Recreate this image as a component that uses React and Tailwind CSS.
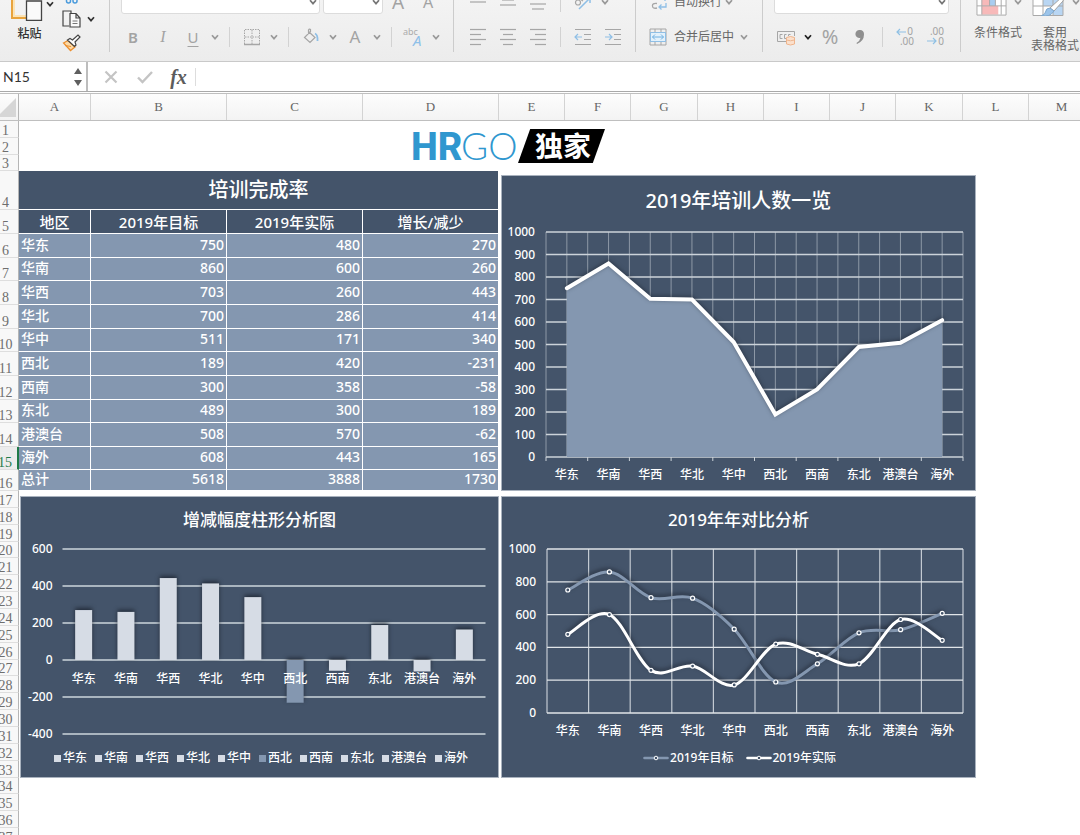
import React from 'react';
import clsx from 'clsx';

const REGIONS = ['华东', '华南', '华西', '华北', '华中', '西北', '西南', '东北', '港澳台', '海外'];
const TARGET = [750, 860, 703, 700, 511, 189, 300, 489, 508, 608];
const ACTUAL = [480, 600, 260, 286, 171, 420, 358, 300, 570, 443];
const DIFF = [270, 260, 443, 414, 340, -231, -58, 189, -62, 165];

const COLUMNS = [
  ['A', 'w-[72px]'], ['B', 'w-[136px]'], ['C', 'w-[136px]'], ['D', 'w-[136px]'],
  ['E', 'w-[66px]'], ['F', 'w-[66px]'], ['G', 'w-[67px]'], ['H', 'w-[66px]'], ['I', 'w-[66px]'],
  ['J', 'w-[66px]'], ['K', 'w-[67px]'], ['L', 'w-[66px]'], ['M', 'w-[66px]'],
];

const DATA_HEIGHTS = [
  'h-[24px]', 'h-[23px]', 'h-[24px]', 'h-[24px]', 'h-[23px]', 'h-[24px]',
  'h-[24px]', 'h-[23px]', 'h-[24px]', 'h-[23px]', 'h-[21px]',
];

const ROW_HEIGHTS = [
  'h-[17px]', 'h-[17px]', 'h-[16px]', 'h-[39px]', 'h-[24px]',
  ...DATA_HEIGHTS,
  ...Array.from({ length: 21 }, (_, i) => (i % 7 === 3 ? 'h-[16px]' : 'h-[17px]')),
];

const TABLE_ROWS = [
  ...REGIONS.map((name, i) => [name, TARGET[i], ACTUAL[i], DIFF[i]]),
  ['总计', 5618, 3888, 1730],
];

/* ---------- Ribbon ---------- */

function Chevron({ className = 'text-[#9a9a9a]' }) {
  return (
    <svg className={clsx('w-2 h-2 shrink-0', className)} viewBox="0 0 8 8" fill="none" stroke="currentColor" strokeWidth="1.7">
      <path d="M1 2.2L4 5.6L7 2.2" />
    </svg>
  );
}

function Tool({ label, children }) {
  return (
    <button type="button" aria-label={label} className="w-[30px] h-6 shrink-0 flex items-center justify-center text-[#a3a3a3]">
      {children}
    </button>
  );
}

function More({ label, className }) {
  return (
    <button type="button" aria-label={label} className="w-[14px] h-6 shrink-0 flex items-center justify-center">
      <Chevron className={className} />
    </button>
  );
}

function Separator() {
  return <div className="w-px h-5 mx-[7px] shrink-0 bg-[#d2d2d2]" />;
}

function Group({ className, children }) {
  return (
    <div className={clsx('flex flex-col gap-[11px] pb-[3px] shrink-0 border-l border-[#cccccc]', className)}>
      {children}
    </div>
  );
}

function Dropdown({ label, className }) {
  return (
    <div className={clsx('relative h-6 shrink-0', className)}>
      <select aria-label={label} className="w-full h-6 appearance-none rounded-[3px] bg-white border border-[#dcdcdc]" />
      <span className="absolute right-[3px] top-2 pointer-events-none"><Chevron className="text-[#777777]" /></span>
    </div>
  );
}

function Lines({ rows }) {
  return (
    <svg width="18" height="18" viewBox="0 0 18 18" stroke="#a6a6a6" strokeWidth="1.2">
      {rows.map(([x1, x2, y]) => <path key={y} d={`M${x1} ${y}H${x2}`} />)}
    </svg>
  );
}

function Indent({ flip }) {
  return (
    <svg width="18" height="18" viewBox="0 0 18 18" fill="none" strokeWidth="1.2">
      <path d="M1 1.5H17M10 6.5H17M10 11.5H17M1 16.5H17" stroke="#a6a6a6" />
      <path d={flip ? 'M1 9H8M5 6L8 9L5 12' : 'M8 9H1M4 6L1 9L4 12'} stroke="#8fbfe6" />
    </svg>
  );
}

function Decimals({ more }) {
  return (
    <svg className="overflow-visible" width="20" height="20" viewBox="0 0 20 20" fill="none">
      <g fill="#a3a3a3" fontFamily="Noto Sans, sans-serif" fontSize="10">
        <text x={more ? 19 : 18} y="8" textAnchor="end">{more ? '.00' : '0'}</text>
        <text x="19" y="18" textAnchor="end">{more ? '0' : '.00'}</text>
      </g>
      <path d={more ? 'M2 14H11M8 11L11 14L8 17' : 'M11 5H2M5 2L2 5L5 8'} stroke="#8fc0e4" strokeWidth="1.2" />
    </svg>
  );
}

function Clipboard() {
  return (
    <div className="flex items-start shrink-0 w-[109px] pl-[10px]">
      <button type="button" className="relative flex flex-col items-center gap-[6px] pb-3 text-xs leading-[13px] font-medium text-[#333333]">
        <svg width="33" height="30" viewBox="0 0 33 30" fill="none">
          <path d="M2 0V27H16" stroke="#e8a33c" strokeWidth="2" />
          <path d="M4 0V25H16" stroke="#fbe3b5" strokeWidth="2" />
          <path d="M16.5 10H31.5V29.5H16.5Z" fill="#fafafa" stroke="#444" strokeWidth="1.3" />
        </svg>
        <span className="pl-[6px]">粘贴</span>
      </button>
      <button type="button" aria-label="粘贴选项" className="mt-2 ml-[3px] h-[10px]"><Chevron className="text-[#333333]" /></button>
      <div className="flex flex-col gap-[6px] ml-2 pt-[3px]">
        <button type="button" aria-label="剪切" className="h-[10px]">
          <svg width="18" height="10" viewBox="0 0 18 10" fill="none" stroke="#4a9bdc" strokeWidth="1.5">
            <rect x="4.5" y="3" width="4" height="6" rx="2" />
            <rect x="11" y="3" width="4" height="6" rx="2" />
          </svg>
        </button>
        <div className="flex items-center gap-[6px]">
          <button type="button" aria-label="复制">
            <svg width="19" height="18" viewBox="0 0 19 18" fill="none" stroke="#444" strokeWidth="1.2">
              <path d="M7 16H1V1H9V3" />
              <path d="M8 3.5H14L18 8V17H8ZM14 3.5V8H18" fill="#fafafa" />
              <path d="M10.5 11H15.5M10.5 13.5H15.5" stroke="#777" />
            </svg>
          </button>
          <button type="button" aria-label="复制选项"><Chevron className="text-[#333333]" /></button>
        </div>
        <button type="button" aria-label="格式刷" className="w-[19px]">
          <svg width="19" height="18" viewBox="0 0 19 18" fill="none">
            <path d="M1.5 9L6 6.5L13 13L8.5 16.5Z" fill="#fbd9a6" stroke="#ec8f2e" strokeWidth="1.3" />
            <path d="M3 11.5L9 12.5" stroke="#ec8f2e" />
            <path d="M5.5 6L8 4.5L10.5 6L16 1L18 3L13 8L14 11L12.5 12.5Z" fill="#fff" stroke="#444" strokeWidth="1.2" />
          </svg>
        </button>
      </div>
    </div>
  );
}

function Ribbon() {
  return (
    <div className="h-[62px] shrink-0 flex items-end pb-[9px] overflow-hidden bg-gradient-to-b from-[#f3f3f3] to-[#ececec] border-b border-[#c9c9c9]">
      <Clipboard />

      <Group className="w-[344px] pl-2">
        <div className="flex items-center h-6 pl-[3px]">
          <Dropdown label="字体" className="w-[199px] mr-[3px]" />
          <Dropdown label="字号" className="w-[60px]" />
          <Tool label="增大字号"><span className="text-[19px]">A</span></Tool>
          <Tool label="减小字号"><span className="text-base">A</span></Tool>
        </div>
        <div className="flex items-center h-6">
          <Tool label="加粗"><span className="text-[15px] font-semibold">B</span></Tool>
          <Tool label="倾斜"><span className="text-base italic font-['Liberation_Serif',serif]">I</span></Tool>
          <Tool label="下划线"><span className="text-[15px] underline underline-offset-[3px]">U</span></Tool>
          <More label="下划线选项" />
          <Separator />
          <Tool label="边框">
            <svg width="18" height="18" viewBox="0 0 18 18" fill="none" stroke="#a6a6a6">
              <path d="M1.5 16V1.5H16.5V16M9 2V16M2 9H16" strokeDasharray="1.5 1" />
              <path d="M1 16.5H17" strokeWidth="1.5" />
            </svg>
          </Tool>
          <More label="边框选项" />
          <Separator />
          <Tool label="填充颜色">
            <svg width="18" height="18" viewBox="0 0 18 18" fill="none" strokeWidth="1.2">
              <path d="M7 4L13 9.5L8 14.5L2.5 9.5L8.5 3.5V1.5Q7.5 0.5 6.5 2V6" stroke="#a6a6a6" />
              <path d="M13 5.5Q16 7 15.5 13" stroke="#8fbfe6" strokeWidth="1.8" />
            </svg>
          </Tool>
          <More label="填充选项" />
          <Tool label="字体颜色"><span className="text-[17px]">A</span></Tool>
          <More label="字体颜色选项" />
          <Separator />
          <Tool label="拼音">
            <svg className="overflow-visible" width="22" height="20" viewBox="0 0 22 20" fontFamily="Noto Sans, sans-serif">
              <text x="0" y="8" fontSize="9" fill="#ababab">abc</text>
              <text x="10" y="19" fontSize="15" fontStyle="italic" fill="#8fc0e8">A</text>
            </svg>
          </Tool>
          <More label="拼音选项" />
        </div>
      </Group>

      <Group className="w-[182px] pl-[9px]">
        <div className="flex items-center h-6">
          <Tool label="顶端对齐"><Lines rows={[[1, 17, 1], [4, 14, 4], [1, 17, 9]]} /></Tool>
          <Tool label="垂直居中"><Lines rows={[[1, 17, 2], [3, 15, 7], [1, 17, 12]]} /></Tool>
          <Tool label="底端对齐"><Lines rows={[[1, 17, 6], [1, 17, 11], [3, 15, 16]]} /></Tool>
          <Separator />
          <Tool label="方向">
            <svg width="18" height="18" viewBox="0 0 18 18" fill="none" strokeWidth="1.2">
              <circle cx="4" cy="9.5" r="2.5" stroke="#a6a6a6" />
              <path d="M6 6L9 8" stroke="#a6a6a6" />
              <path d="M5 16L16 5M16 5H11M16 5V10" stroke="#8fbfe6" strokeWidth="1.5" />
            </svg>
          </Tool>
          <More label="方向选项" />
        </div>
        <div className="flex items-center h-6">
          <Tool label="左对齐"><Lines rows={[[1, 17, 1.5], [1, 12, 6.5], [1, 17, 11.5], [1, 12, 16.5]]} /></Tool>
          <Tool label="居中"><Lines rows={[[1, 17, 1.5], [4, 14, 6.5], [1, 17, 11.5], [4, 14, 16.5]]} /></Tool>
          <Tool label="右对齐"><Lines rows={[[1, 17, 1.5], [6, 17, 6.5], [1, 17, 11.5], [6, 17, 16.5]]} /></Tool>
          <Separator />
          <Tool label="减少缩进"><Indent /></Tool>
          <Tool label="增加缩进"><Indent flip /></Tool>
        </div>
      </Group>

      <Group className="w-[127px] pl-[13px] text-xs text-[#666666]">
        <div className="flex items-center h-6">
          <button type="button" className="flex items-center gap-[7px]">
            <svg width="18" height="18" viewBox="0 0 18 18" fill="none" strokeWidth="1.3">
              <path d="M8 5H4M8 10.5Q3 10 3.5 13Q3.5 16 8 15" stroke="#a6a6a6" />
              <path d="M11 5H16V8M17 10V14H10M12.5 11.5L10 14L12.5 16.5" stroke="#8fbfe6" />
            </svg>
            自动换行
          </button>
          <More label="换行选项" />
        </div>
        <div className="flex items-center h-6">
          <button type="button" className="flex items-center gap-[7px]">
            <svg width="18" height="18" viewBox="0 0 18 18" fill="none">
              <path d="M1 1H17V17H1ZM1 4.5H17M1 13.5H17M6 1V4.5M12 1V4.5M6 13.5V17M12 13.5V17" stroke="#a6a6a6" />
              <path d="M1.5 4.5H16.5V13.5H1.5Z" fill="#e3f1fb" stroke="#8fbfe6" />
              <path d="M3.5 9H14.5M6 6.5L3.5 9L6 11.5M12 6.5L14.5 9L12 11.5" stroke="#6fb0e2" />
            </svg>
            合并后居中
          </button>
          <div className="pl-[3px]"><More label="合并选项" /></div>
        </div>
      </Group>

      <Group className="w-[198px] pl-2">
        <div className="flex items-center h-6 pl-[3px]">
          <Dropdown label="数字格式" className="w-[175px]" />
        </div>
        <div className="flex items-center h-6">
          <Tool label="会计数字格式">
            <svg width="20" height="18" viewBox="0 0 20 18" fill="none" stroke="#a6a6a6">
              <path d="M10 13.5H1.5V3.5H18.5V8" />
              <path d="M6.5 6.5H4V10.5H6.5M10.5 6.5H8.5V10.5H10M14.5 6.5H12.5V8" />
              <path d="M10.5 9.5Q14.5 7.5 18.5 9.5V16Q14.5 18 10.5 16ZM10.5 12Q14.5 13.5 18.5 12" fill="#fbe0cc" stroke="#efb48c" />
            </svg>
          </Tool>
          <More label="货币选项" className="text-[#222222]" />
          <Tool label="百分比"><span className="text-xl">%</span></Tool>
          <Tool label="千位分隔">
            <svg width="12" height="16" viewBox="0 0 12 16" fill="#8f8f8f">
              <path d="M6 1A4 4 0 0 1 10 5.500Q10 12 3 15L2.500 14Q6 12 6.500 8.800A4 4 0 1 1 6 1Z" />
            </svg>
          </Tool>
          <Separator />
          <Tool label="增加小数位"><Decimals /></Tool>
          <Tool label="减少小数位"><Decimals more /></Tool>
        </div>
      </Group>

      <div className="flex items-end gap-[9px] shrink-0 pl-[13px] border-l border-[#cccccc] text-xs leading-[13px] text-[#666666]">
        <button type="button" className="flex flex-col gap-[10px] w-12">
          <span className="flex items-center gap-[7px] pl-[2px]">
            <svg width="32" height="28" viewBox="0 0 32 28" fill="none">
              <path d="M1 0H31V27.5H1Z" fill="#fff" />
              <path d="M6 0H20V18H6Z" fill="#f7b9b9" />
              <path d="M14 0H20V18H14Z" fill="#a9cdf0" />
              <path d="M6 18H23V27H6Z" fill="#f7b9b9" />
              <path d="M1 0V27.5H31V0M6 0V27M26 0V27M1 9H31M1 18H31M20 0V18M14 0V18" stroke="#a9a9a9" />
            </svg>
            <Chevron />
          </span>
          <span className="h-[26px]">条件格式</span>
        </button>
        <button type="button" className="flex flex-col items-center gap-[10px] w-12">
          <span className="flex items-center gap-[7px] pl-[2px]">
            <svg width="33" height="28" viewBox="0 0 33 28" fill="none">
              <path d="M1 0H31V27.5H1Z" fill="#fff" />
              <path d="M11 0H31V18H11ZM21 18H31V27H21Z" fill="#b9d6f3" />
              <path d="M1 0V27.5H31V0M11 0V27M21 0V27M1 9H31M1 18H31" stroke="#a9a9a9" />
              <path d="M31 8Q33 10 31 13L22 23L18 20Z" fill="#fff" stroke="#a0a0a0" />
              <path d="M18 20Q14 20 13.5 24Q13 27 9.5 27.5Q18 29.5 22 23Z" fill="#9cc4ea" stroke="#7fa9cf" />
            </svg>
            <Chevron />
          </span>
          <span className="w-12">套用<br />表格格式</span>
        </button>
      </div>
    </div>
  );
}

function FormulaBar() {
  return (
    <div className="h-[30px] shrink-0 flex items-center bg-white border-b border-[#a9a9a9]">
      <div className="flex items-center w-[88px] h-full border-r-2 border-[#bdbdbd]">
        <input aria-label="名称框" defaultValue="N15" className="w-[73px] pl-[3px] text-sm text-[#333333] font-['Lato',sans-serif] outline-none" />
        <svg width="10" height="20" viewBox="0 0 10 20" fill="#5f5f5f">
          <path d="M1 7L5 1L9 7Z M1 13L5 19L9 13Z" />
        </svg>
      </div>
      <button type="button" aria-label="取消" className="w-[34px] ml-[6px] flex justify-center">
        <svg width="14" height="14" viewBox="0 0 14 14" stroke="#c4c4c4" strokeWidth="2.2"><path d="M1.5 1.5L12.5 12.5M12.5 1.5L1.5 12.5" /></svg>
      </button>
      <button type="button" aria-label="输入" className="w-[34px] flex justify-center">
        <svg width="16" height="14" viewBox="0 0 16 14" fill="none" stroke="#c4c4c4" strokeWidth="2.4"><path d="M1 7.5L5.5 12L15 2" /></svg>
      </button>
      <button type="button" aria-label="插入函数" className="w-[33px] text-center text-xl leading-6 italic font-bold text-[#5c5c5c] font-['Liberation_Serif',serif]">fx</button>
      <div className="w-px h-[18px] bg-[#dddddd]" />
      <input aria-label="编辑栏" className="flex-1 h-full px-2 text-sm outline-none" />
    </div>
  );
}

/* ---------- Charts ---------- */

const FONT = "'Noto Sans', 'Noto Sans CJK SC', sans-serif";
const AXIS = { fill: '#fff', fontSize: 12, fontWeight: 500, fontFamily: FONT };

function Panel({ title, className, titleClass, children }) {
  return (
    <section className={clsx('flex flex-col bg-[#44546a] border border-[#a9b2be] text-white overflow-hidden', className)}>
      <h2 className={clsx('h-[30px] leading-[30px] text-center shrink-0', titleClass)}>{title}</h2>
      {children}
    </section>
  );
}

function Axes({ ticks, y, labelX, x, labelY }) {
  return (
    <g {...AXIS}>
      {ticks.map((t) => <text key={t} x={labelX} y={y(t) + 4} textAnchor="end">{t}</text>)}
      {REGIONS.map((name, i) => <text key={name} x={x(i)} y={labelY} textAnchor="middle">{name}</text>)}
    </g>
  );
}

function AreaChart() {
  const left = 44, right = 461, top = 16, bottom = 241;
  const step = (right - left) / 10;
  const x = (i) => left + step * (i + 0.5);
  const y = (v) => bottom - ((bottom - top) * v) / 1000;
  const ticks = Array.from({ length: 11 }, (_, i) => i * 100);
  const line = TARGET.map((v, i) => `${x(i)},${y(v)}`).join(' ');
  return (
    <svg className="w-full h-[274px]" viewBox="0 0 473 274" fill="none">
      {Array.from({ length: 21 }, (_, i) => (
        <path key={i} d={`M${left + (step * i) / 2} ${top}V${bottom}`} stroke="#8d98a6" />
      ))}
      {ticks.map((t) => <path key={t} d={`M${left} ${y(t)}H${right}`} stroke="#ccd3da" strokeWidth="1.3" />)}
      {Array.from({ length: 11 }, (_, i) => (
        <path key={i} d={`M${left + step * i} ${bottom}v4`} stroke="#ccd3da" />
      ))}
      <polygon points={`${x(0)},${bottom} ${line} ${x(9)},${bottom}`} fill="#8497b0" />
      <polyline points={line} stroke="#fff" strokeWidth="4" strokeLinecap="round" className="drop-shadow-[0_-1px_2px_rgba(20,25,35,0.5)]" />
      <Axes ticks={ticks} x={x} y={y} labelX={33} labelY={263} />
    </svg>
  );
}

function BarChart() {
  const left = 41, right = 464, zero = 125;
  const step = (right - left) / 10;
  const x = (i) => left + step * (i + 0.5);
  const y = (v) => zero - (v * 37) / 200;
  const ticks = [600, 400, 200, 0, -200, -400];
  return (
    <>
      <svg className="w-full h-[212px]" viewBox="0 0 476 212" fill="none">
        {ticks.map((t) => <path key={t} d={`M${left} ${y(t)}H${right}`} stroke="#ccd6dd" strokeWidth="1.6" />)}
        {DIFF.map((v, i) => (
          <rect
            key={REGIONS[i]}
            x={x(i) - 8.5}
            y={Math.min(y(v), zero)}
            width="17"
            height={Math.abs(y(v) - zero)}
            fill={i === 5 ? '#8497b0' : '#d6dce5'}
            className="drop-shadow-[0_-2px_2px_rgba(20,25,35,0.7)]"
          />
        ))}
        <Axes ticks={ticks} x={x} y={y} labelX={31} labelY={148} />
      </svg>
      <ul className="flex justify-center gap-2 h-[22px] pl-[3px] text-xs font-medium">
        {REGIONS.map((name, i) => (
          <li key={name} className="flex items-center gap-[2px] shrink-0">
            <span className={clsx('w-[7px] h-[7px]', i === 5 ? 'bg-[#8497b0]' : 'bg-[#d6dce5]')} />
            {name}
          </li>
        ))}
      </ul>
    </>
  );
}

function smooth(points) {
  return points.slice(0, -1).reduce((d, p1, i) => {
    const p0 = points[i - 1] || p1;
    const p2 = points[i + 1];
    const p3 = points[i + 2] || p2;
    const c1 = [p1[0] + (p2[0] - p0[0]) / 6, p1[1] + (p2[1] - p0[1]) / 6];
    const c2 = [p2[0] - (p3[0] - p1[0]) / 6, p2[1] - (p3[1] - p1[1]) / 6];
    return `${d} C${c1} ${c2} ${p2}`;
  }, `M${points[0]}`);
}

const SERIES = [
  { name: '2019年目标', values: TARGET, color: '#8497b0' },
  { name: '2019年实际', values: ACTUAL, color: '#ffffff' },
];

function LineChart() {
  const left = 45, right = 461, top = 14, bottom = 178;
  const step = (right - left) / 10;
  const x = (i) => left + step * (i + 0.5);
  const y = (v) => bottom - ((bottom - top) * v) / 1000;
  const ticks = [0, 200, 400, 600, 800, 1000];
  return (
    <>
      <svg className="w-full h-[212px]" viewBox="0 0 473 212" fill="none">
        {Array.from({ length: 11 }, (_, i) => <path key={i} d={`M${left + step * i} ${top}V${bottom}`} stroke="#c3cad2" strokeWidth="1.2" />)}
        {ticks.map((t) => <path key={t} d={`M${left} ${y(t)}H${right}`} stroke="#e1e5e9" strokeWidth="1.3" />)}
        {SERIES.map(({ name, values, color }) => (
          <path
            key={name}
            d={smooth(values.map((v, i) => [x(i), y(v)]))}
            stroke={color}
            strokeWidth="3"
            strokeLinecap="round"
            className="drop-shadow-[0_-2px_2px_rgba(20,25,35,0.6)]"
          />
        ))}
        {SERIES.map(({ name, values }) => values.map((v, i) => (
          <circle key={name + i} cx={x(i)} cy={y(v)} r="2" fill="#44546a" stroke="#fff" strokeWidth="1.2" />
        )))}
        <Axes ticks={ticks} x={x} y={y} labelX={34} labelY={200} />
      </svg>
      <ul className="flex justify-center gap-3 h-[22px] pl-[2px] text-xs font-medium">
        {SERIES.map(({ name, color }) => (
          <li key={name} className="flex items-center gap-px">
            <svg width="26" height="8" viewBox="0 0 26 8">
              <path d="M1.5 4H24.5" stroke={color} strokeWidth="2.6" strokeLinecap="round" />
              <circle cx="13" cy="4" r="1.8" fill="#44546a" stroke="#fff" />
            </svg>
            {name}
          </li>
        ))}
      </ul>
    </>
  );
}

/* ---------- Sheet ---------- */

function DataTable() {
  return (
    <table className="w-[480px] table-fixed border-separate border-spacing-0 text-white font-medium">
      <colgroup>
        <col className="w-[72px]" />
        <col className="w-[136px]" />
        <col className="w-[136px]" />
        <col className="w-[136px]" />
      </colgroup>
      <thead className="bg-[#44546a]">
        <tr className="h-[39px]">
          <th colSpan={4} className="p-0 text-xl leading-6 font-medium border-b border-r border-white">培训完成率</th>
        </tr>
        <tr className="h-[24px]">
          {['地区', '2019年目标', '2019年实际', '增长/减少'].map((h) => (
            <th key={h} scope="col" className="p-0 text-[15px] leading-5 font-medium border-b border-r border-white">{h}</th>
          ))}
        </tr>
      </thead>
      <tbody className="bg-[#8497b0] text-sm leading-[18px]">
        {TABLE_ROWS.map(([name, ...values], i) => (
          <tr key={name} className={DATA_HEIGHTS[i]}>
            <th scope="row" className="pt-0 pb-[2px] pl-[2px] pr-0 text-left font-medium border-b border-r border-white">{name}</th>
            {values.map((v, j) => (
              <td key={j} className="pt-0 pb-[2px] pl-0 pr-[2px] text-right border-b border-r border-white">{v}</td>
            ))}
          </tr>
        ))}
      </tbody>
    </table>
  );
}

function Logo() {
  return (
    <div className="flex items-center h-[50px] pl-[391px] gap-[2px]">
      <svg width="106" height="40" viewBox="0 0 106 40" fill="#2f97cf">
        <text x="1" y="34" fontSize="38" fontWeight="800" fontFamily="Roboto, sans-serif">HR</text>
        <text x="51" y="34" fontSize="37" fontWeight="300" fontFamily="Lato, sans-serif">GO</text>
      </svg>
      <div className="w-[87px] h-[34px] flex items-center justify-center pl-[3px] bg-black text-white text-[28px] leading-8 font-bold [clip-path:polygon(14%_0,100%_0,86%_100%,0_100%)]">
        独家
      </div>
    </div>
  );
}

export default function App() {
  return (
    <div className="h-screen flex flex-col overflow-hidden bg-white font-['Noto_Sans','Noto_Sans_CJK_SC',sans-serif]">
      <Ribbon />
      <FormulaBar />

      {/* Column headers */}
      <div className="flex shrink-0 h-[28px] mt-px border-t border-b border-[#bfbfbf] bg-gradient-to-b from-[#fdfdfd] to-[#f3f3f3] font-['Liberation_Serif',serif] text-[13px] text-[#666666] overflow-hidden">
        <div className="w-[19px] shrink-0 border-r border-[#b5b5b5] flex items-center">
          <svg width="17" height="19" viewBox="0 0 17 19" fill="#d6d6d6"><path d="M16 0V19H-3Z" /></svg>
        </div>
        {COLUMNS.map(([name, width]) => (
          <div key={name} className={clsx('shrink-0 flex items-center justify-center border-r border-[#d3d3d3]', width)}>{name}</div>
        ))}
      </div>

      <div className="flex flex-1 min-h-0 overflow-hidden">
        {/* Row headers */}
        <div className="w-[19px] shrink-0 bg-[#f8f8f8] font-['Liberation_Serif',serif] text-sm text-[#6e6e6e]">
          {ROW_HEIGHTS.map((height, i) => (
            <div
              key={i}
              className={clsx(
                'flex items-end justify-center pr-[7px] border-b border-b-[#dedede] leading-3',
                i === 14 ? 'border-r-2 border-r-[#1f7a48] text-[#1f7a48] bg-[#ececec]' : 'border-r border-r-[#b5b5b5]',
                height,
              )}
            >
              {i + 1}
            </div>
          ))}
        </div>

        <main className="flex-1 min-w-0">
          <Logo />
          <div className="flex gap-[2px]">
            <div className="w-[480px] shrink-0 flex flex-col gap-[5px]">
              <DataTable />
              <Panel title="增减幅度柱形分析图" className="ml-px h-[282px] pt-2" titleClass="text-[17px] font-medium">
                <BarChart />
              </Panel>
            </div>
            <div className="w-[475px] shrink-0 flex flex-col gap-[5px] pt-1">
              <Panel title="2019年培训人数一览" className="h-[316px] pt-[10px]" titleClass="text-xl font-medium">
                <AreaChart />
              </Panel>
              <Panel title="2019年年对比分析" className="h-[282px] pt-2" titleClass="text-[17px] font-medium">
                <LineChart />
              </Panel>
            </div>
          </div>
        </main>
      </div>
    </div>
  );
}
